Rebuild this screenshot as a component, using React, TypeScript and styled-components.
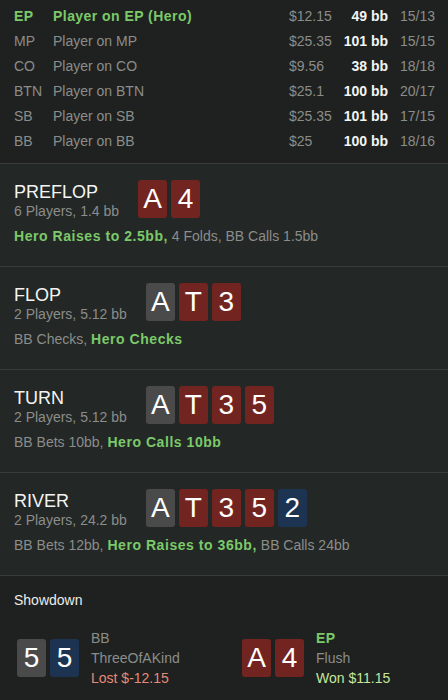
import React from "react";
import styled, { createGlobalStyle } from "styled-components";

const Global = createGlobalStyle`
  html, body { margin: 0; padding: 0; background: #1e211f; }
  body { font-family: "Liberation Sans", Arial, sans-serif; -webkit-font-smoothing: antialiased; }
`;

const GREEN = "#7bc96a";
const GRAY = "#8b8d8b";

const Page = styled.div`
  width: 448px;
  height: 700px;
  overflow: hidden;
  background: #1e211f;
  color: #f2f2f2;
`;

const Table = styled.div`
  display: grid;
  grid-template-columns: 39px 1fr 50px 49px 12px 34px;
  grid-auto-rows: 25px;
  align-items: center;
  padding: 3px 14px 10px;
  font-size: 14px;
  border-bottom: 1px solid #383b39;
`;

const Cell = styled.div<{ $hero?: boolean; $tone?: "gray" | "white"; $right?: boolean; $bold?: boolean }>`
  color: ${(p) => (p.$hero ? GREEN : p.$tone === "white" ? "#f4f4f4" : GRAY)};
  font-weight: ${(p) => (p.$hero || p.$bold ? 700 : 400)};
  letter-spacing: ${(p) => (p.$hero ? "0.45px" : "0")};
  text-align: ${(p) => (p.$right ? "right" : "left")};
  white-space: nowrap;
`;

const Spacer = styled.div``;

const Street = styled.section`
  background: #232725;
  padding: 16px 14px 0;
  height: 103px;
  box-sizing: border-box;
  border-bottom: 1px solid #383b39;
`;

const StreetHead = styled.div`
  display: flex;
  align-items: center;
  gap: 19px;
  height: 38px;
`;

const TitleBlock = styled.div`
  display: flex;
  flex-direction: column;
  padding-top: 3px;
`;

const Title = styled.div`
  font-size: 18px;
  line-height: 20px;
  color: #f4f4f4;
`;

const Sub = styled.div`
  font-size: 14px;
  line-height: 18px;
  color: ${GRAY};
`;

const Cards = styled.div`
  display: flex;
  gap: 4px;
`;

const suitColors = { g: "#4a4a4a", r: "#722520", b: "#1c3352" } as const;

const Card = styled.div<{ $suit: keyof typeof suitColors }>`
  width: 29px;
  height: 38px;
  border-radius: 3px;
  background: ${(p) => suitColors[p.$suit]};
  color: #fff;
  font-size: 28px;
  line-height: 38px;
  text-align: center;
`;

const Actions = styled.div`
  margin-top: 9px;
  font-size: 14px;
  line-height: 18px;
  color: ${GRAY};
  white-space: nowrap;
`;

const Hero = styled.span`
  color: ${GREEN};
  font-weight: 700;
  letter-spacing: 0.55px;
`;

const Showdown = styled.section`
  padding: 15px 0 0;
`;

const ShowTitle = styled.div`
  padding-left: 14px;
  font-size: 14px;
  line-height: 18px;
  color: #ececec;
`;

const ShowGrid = styled.div`
  display: grid;
  grid-template-columns: 225px 1fr;
  padding: 19px 0 0 17px;
`;

const ShowPlayer = styled.div`
  display: flex;
  align-items: center;
  gap: 12px;
`;

const Info = styled.div`
  display: flex;
  flex-direction: column;
  font-size: 14px;
  line-height: 20px;
`;

const Line = styled.div<{ $color: string; $bold?: boolean }>`
  color: ${(p) => p.$color};
  font-weight: ${(p) => (p.$bold ? 700 : 400)};
  letter-spacing: ${(p) => (p.$bold ? "0.45px" : "0")};
`;

type Suit = keyof typeof suitColors;
const CardRow = ({ cards }: { cards: [string, Suit][] }) => (
  <Cards>
    {cards.map(([r, s], i) => (
      <Card key={i} $suit={s}>
        {r}
      </Card>
    ))}
  </Cards>
);

const players = [
  ["EP", "Player on EP (Hero)", "$12.15", "49 bb", "15/13", true],
  ["MP", "Player on MP", "$25.35", "101 bb", "15/15", false],
  ["CO", "Player on CO", "$9.56", "38 bb", "18/18", false],
  ["BTN", "Player on BTN", "$25.1", "100 bb", "20/17", false],
  ["SB", "Player on SB", "$25.35", "101 bb", "17/15", false],
  ["BB", "Player on BB", "$25", "100 bb", "18/16", false],
] as const;

const streets: { title: string; sub: string; cards: [string, Suit][]; actions: React.ReactNode }[] = [
  {
    title: "PREFLOP",
    sub: "6 Players, 1.4 bb",
    cards: [["A", "r"], ["4", "r"]],
    actions: (
      <>
        <Hero>Hero Raises to 2.5bb,</Hero> 4 Folds, BB Calls 1.5bb
      </>
    ),
  },
  {
    title: "FLOP",
    sub: "2 Players, 5.12 bb",
    cards: [["A", "g"], ["T", "r"], ["3", "r"]],
    actions: (
      <>
        BB Checks, <Hero>Hero Checks</Hero>
      </>
    ),
  },
  {
    title: "TURN",
    sub: "2 Players, 5.12 bb",
    cards: [["A", "g"], ["T", "r"], ["3", "r"], ["5", "r"]],
    actions: (
      <>
        BB Bets 10bb, <Hero>Hero Calls 10bb</Hero>
      </>
    ),
  },
  {
    title: "RIVER",
    sub: "2 Players, 24.2 bb",
    cards: [["A", "g"], ["T", "r"], ["3", "r"], ["5", "r"], ["2", "b"]],
    actions: (
      <>
        BB Bets 12bb, <Hero>Hero Raises to 36bb,</Hero> BB Calls 24bb
      </>
    ),
  },
];

export default function App() {
  return (
    <Page>
      <Global />
      <Table>
        {players.map(([pos, name, amt, bb, st, hero]) => (
          <React.Fragment key={pos}>
            <Cell $hero={hero}>{pos}</Cell>
            <Cell $hero={hero}>{name}</Cell>
            <Cell>{amt}</Cell>
            <Cell $tone="white" $right $bold>
              {bb}
            </Cell>
            <Spacer />
            <Cell>{st}</Cell>
          </React.Fragment>
        ))}
      </Table>
      {streets.map((s) => (
        <Street key={s.title}>
          <StreetHead>
            <TitleBlock>
              <Title>{s.title}</Title>
              <Sub>{s.sub}</Sub>
            </TitleBlock>
            <CardRow cards={s.cards} />
          </StreetHead>
          <Actions>{s.actions}</Actions>
        </Street>
      ))}
      <Showdown>
        <ShowTitle>Showdown</ShowTitle>
        <ShowGrid>
          <ShowPlayer>
            <CardRow cards={[["5", "g"], ["5", "b"]]} />
            <Info>
              <Line $color={GRAY}>BB</Line>
              <Line $color={GRAY}>ThreeOfAKind</Line>
              <Line $color="#e5897a">Lost $-12.15</Line>
            </Info>
          </ShowPlayer>
          <ShowPlayer>
            <CardRow cards={[["A", "r"], ["4", "r"]]} />
            <Info>
              <Line $color={GREEN} $bold>
                EP
              </Line>
              <Line $color={GRAY}>Flush</Line>
              <Line $color="#c4e79c">Won $11.15</Line>
            </Info>
          </ShowPlayer>
        </ShowGrid>
      </Showdown>
    </Page>
  );
}
